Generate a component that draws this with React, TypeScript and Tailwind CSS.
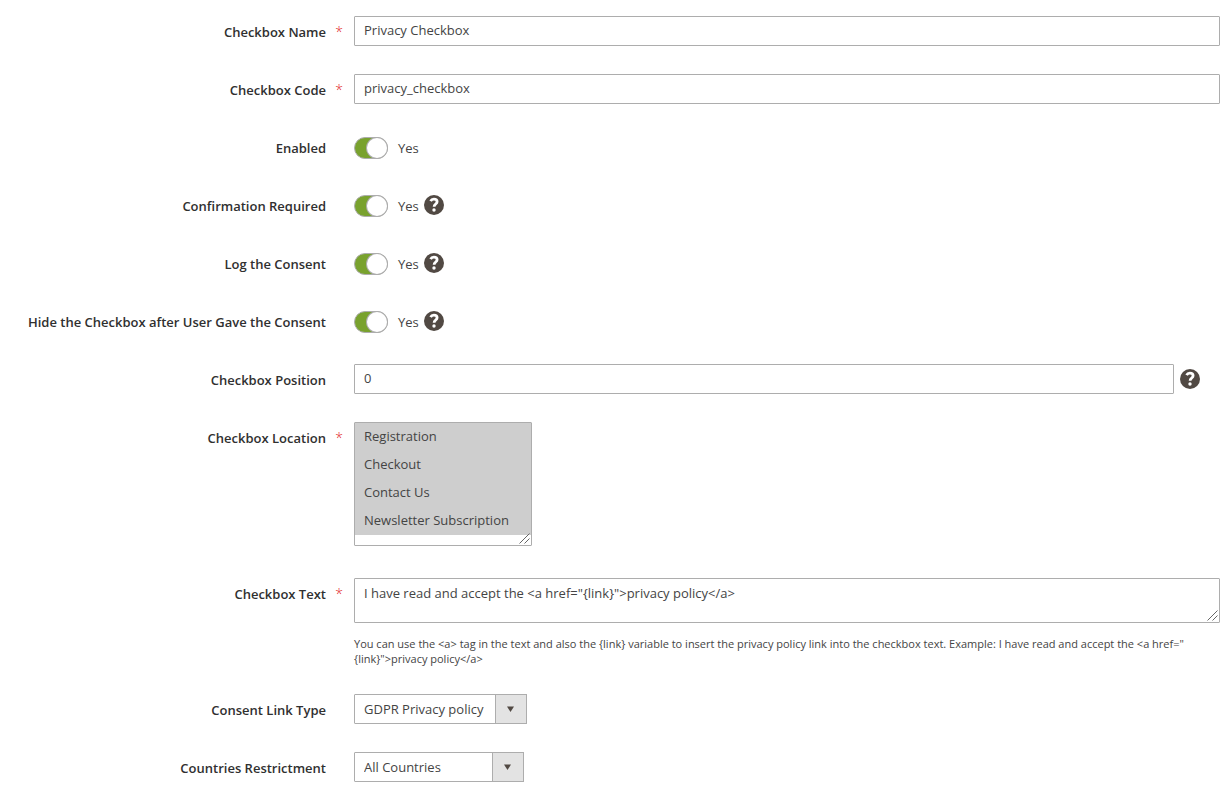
import { FC, ReactNode } from "react";

type FieldProps = {
  label: string;
  htmlFor: string;
  required?: boolean;
  children: ReactNode;
};

const Field: FC<FieldProps> = ({ label, htmlFor, required, children }) => (
  <div className="flex items-start">
    <label
      htmlFor={htmlFor}
      className="flex w-[354px] shrink-0 justify-end pt-[7px] font-semibold leading-[18px] text-[#303030]"
    >
      {label}
      <span className="w-7 pr-[2px] text-center text-[14px] font-light text-[#e22626]">
        {required && "*"}
      </span>
    </label>
    <div className="min-w-0 flex-1">{children}</div>
  </div>
);

const HelpIcon: FC = () => (
  <svg viewBox="0 0 20 20" className="size-5 shrink-0" role="img" aria-label="Help">
    <circle cx="10" cy="10" r="10" fill="#514943" />
    <path
      d="M6.6 6.1C7.3 4.7 8.4 4.2 9.9 4.2c2 0 3.2 1 3.2 2.6 0 2.2-3 2.3-3 5"
      fill="none"
      stroke="#fff"
      strokeWidth="2.8"
    />
    <circle cx="10" cy="15" r="1.7" fill="#fff" />
  </svg>
);

const ResizeGrip: FC = () => (
  <svg
    viewBox="0 0 11 11"
    className="pointer-events-none absolute bottom-[2px] right-[2px] size-[11px]"
    aria-hidden="true"
  >
    <path d="M0.5 10.5l10-10M5.5 10.5l5-5" stroke="#666" strokeWidth="1" />
  </svg>
);

type ToggleProps = { id: string; label: string; help?: boolean };

const ToggleField: FC<ToggleProps> = ({ id, label, help }) => (
  <Field label={label} htmlFor={id}>
    <div className="flex h-[30px] gap-[5px]">
      <div className="flex items-center gap-[10px] pt-[2px]">
        <input
          id={id}
          type="checkbox"
          role="switch"
          defaultChecked
          className="m-0 h-[22px] w-[34px] appearance-none rounded-full border border-[#adadad] bg-[#e3e3e3] before:block before:size-5 before:rounded-full before:bg-white before:shadow-[0_0_0_1px_#adadad] checked:bg-[#79a22e] checked:before:ml-3"
        />
        <label htmlFor={id}>Yes</label>
      </div>
      {help && (
        <div className="flex items-center">
          <HelpIcon />
        </div>
      )}
    </div>
  </Field>
);

type DropdownProps = { id: string; value: string; className?: string };

const Dropdown: FC<DropdownProps> = ({ id, value, className }) => (
  <div className="relative inline-flex align-top">
    <select
      id={id}
      className={`h-[30px] appearance-none rounded-[1px] border border-[#adadad] bg-white pb-[1px] pl-[9px] pr-[42px] ${className ?? ""}`}
    >
      <option>{value}</option>
    </select>
    <span className="pointer-events-none absolute inset-y-0 right-0 flex w-8 items-center justify-center border border-[#adadad] bg-[#e3e3e3]">
      <svg viewBox="0 0 8 6" className="h-[6px] w-2" aria-hidden="true">
        <path d="M0 0.5h7L3.5 6z" fill="#514943" />
      </svg>
    </span>
  </div>
);

const inputClass =
  "block h-[30px] w-full rounded-[1px] border border-[#adadad] bg-white px-[9px] pb-[2px]";

const locations = [
  "Registration",
  "Checkout",
  "Contact Us",
  "Newsletter Subscription",
];

const App: FC = () => (
  <form className="flex min-h-screen flex-col gap-7 bg-white pb-[6px] pr-[11px] pt-4 font-['Open_Sans','Noto_Sans',sans-serif] text-[13px] leading-[18px] text-[#444444]">
    <Field label="Checkbox Name" htmlFor="name" required>
      <input id="name" type="text" defaultValue="Privacy Checkbox" className={inputClass} />
    </Field>
    <Field label="Checkbox Code" htmlFor="code" required>
      <input id="code" type="text" defaultValue="privacy_checkbox" className={inputClass} />
    </Field>
    <ToggleField id="enabled" label="Enabled" />
    <ToggleField id="confirmation" label="Confirmation Required" help />
    <ToggleField id="log" label="Log the Consent" help />
    <ToggleField id="hide" label="Hide the Checkbox after User Gave the Consent" help />
    <Field label="Checkbox Position" htmlFor="position">
      <div className="flex items-center gap-[6px] pr-5">
        <input id="position" type="text" defaultValue="0" className={inputClass} />
        <HelpIcon />
      </div>
    </Field>
    <Field label="Checkbox Location" htmlFor="location" required>
      <div className="relative inline-block align-top">
        <select
          id="location"
          multiple
          defaultValue={locations}
          className="block h-[124px] w-[178px] resize overflow-auto rounded-[1px] border border-[#adadad] bg-white p-0 [&::-webkit-resizer]:hidden"
        >
          {locations.map((location) => (
            <option
              key={location}
              className="px-[9px] pb-[6px] pt-1 leading-[18px] checked:text-[#444444]"
            >
              {location}
            </option>
          ))}
        </select>
        <ResizeGrip />
      </div>
    </Field>
    <div className="mt-1">
      <Field label="Checkbox Text" htmlFor="text" required>
        <div className="relative">
          <textarea
            id="text"
            defaultValue={'I have read and accept the <a href="{link}">privacy policy</a>'}
            className="block h-[45px] w-full resize-y rounded-[1px] border border-[#adadad] bg-white px-[9px] py-[5px] [&::-webkit-resizer]:hidden"
          />
          <ResizeGrip />
        </div>
        <p className="mt-[13px] text-[11px] leading-[15px]">
          You can use the &lt;a&gt; tag in the text and also the {"{link}"} variable
          to insert the privacy policy link into the checkbox text. Example: I have
          read and accept the &lt;a href="{"{link}"}"&gt;privacy policy&lt;/a&gt;
        </p>
      </Field>
    </div>
    <Field label="Consent Link Type" htmlFor="link-type">
      <Dropdown id="link-type" value="GDPR Privacy policy" />
    </Field>
    <Field label="Countries Restrictment" htmlFor="countries">
      <Dropdown id="countries" value="All Countries" className="w-[170px]" />
    </Field>
  </form>
);

export default App;
